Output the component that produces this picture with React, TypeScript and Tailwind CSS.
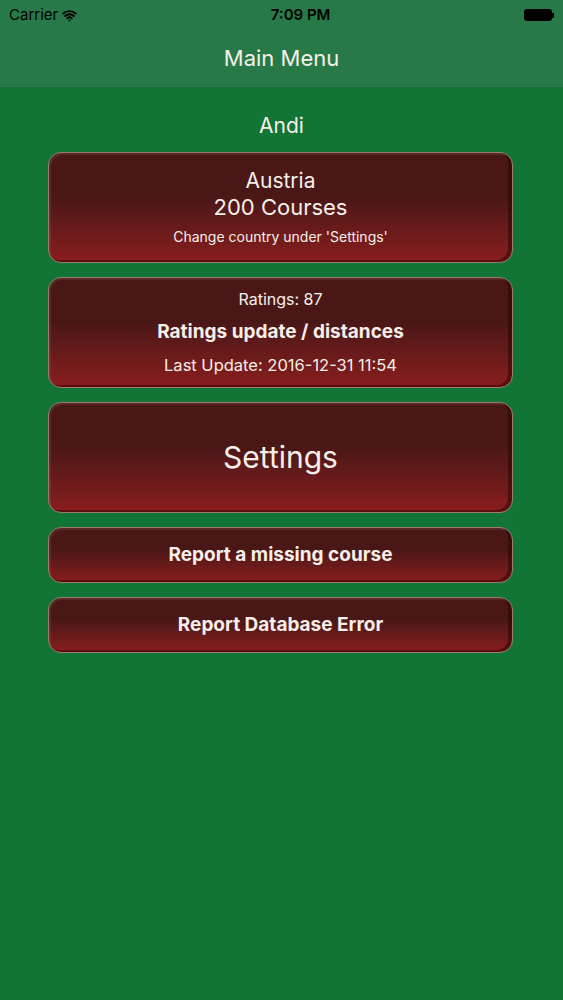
import { Wifi } from "lucide-react";

function MenuButton({ tall, children }: { tall?: boolean; children: React.ReactNode }) {
  return (
    <button
      className={
        "w-full flex flex-col items-center justify-center rounded-[13px] border border-[#9a7d70] bg-gradient-to-b from-[#4a1717] from-40% to-[#8a1d1d] text-[#f6efe9] shadow-[inset_-4px_-2px_0_rgba(30,0,0,0.45),inset_2px_2px_0_rgba(255,255,255,0.08)] " +
        (tall ? "h-[111px]" : "h-[56px]")
      }
    >
      {children}
    </button>
  );
}

export default function App() {
  return (
    <div className="min-h-[1000px] w-[563px] bg-[#127535] font-['Inter',sans-serif] text-[#f6efe9]">
      <div className="bg-[#277a47] border-b border-[#1e6a3a]">
        <div className="h-[30px] px-[9px] flex items-center justify-between text-black">
          <div className="flex items-center gap-1 text-[15px]">
            Carrier <Wifi size={15} strokeWidth={3} />
          </div>
          <div className="text-[15px] font-semibold">7:09 PM</div>
          <div className="flex items-center">
            <div className="w-[28px] h-[12px] rounded-[3px] bg-black" />
            <div className="w-[2px] h-[5px] bg-black" />
          </div>
        </div>
        <div className="h-[57px] flex items-center justify-center text-[22px]">Main Menu</div>
      </div>
      <div className="text-center text-[21px] mt-[23px] mb-[11px] leading-[30px]">Andi</div>
      <div className="w-[465px] mx-[48px] flex flex-col gap-[14px]">
        <MenuButton tall>
          <div className="text-[21px] leading-[26px]">Austria</div>
          <div className="text-[22px] leading-[26px]">200 Courses</div>
          <div className="text-[14px] mt-[6px]">Change country under 'Settings'</div>
        </MenuButton>
        <MenuButton tall>
          <div className="text-[16px]">Ratings: 87</div>
          <div className="text-[19px] font-bold mt-[7px]">Ratings update / distances</div>
          <div className="text-[16.5px] mt-[7px]">Last Update: 2016-12-31 11:54</div>
        </MenuButton>
        <MenuButton tall>
          <div className="text-[30px]">Settings</div>
        </MenuButton>
        <MenuButton>
          <div className="text-[19px] font-bold">Report a missing course</div>
        </MenuButton>
        <MenuButton>
          <div className="text-[19px] font-bold">Report Database Error</div>
        </MenuButton>
      </div>
    </div>
  );
}
